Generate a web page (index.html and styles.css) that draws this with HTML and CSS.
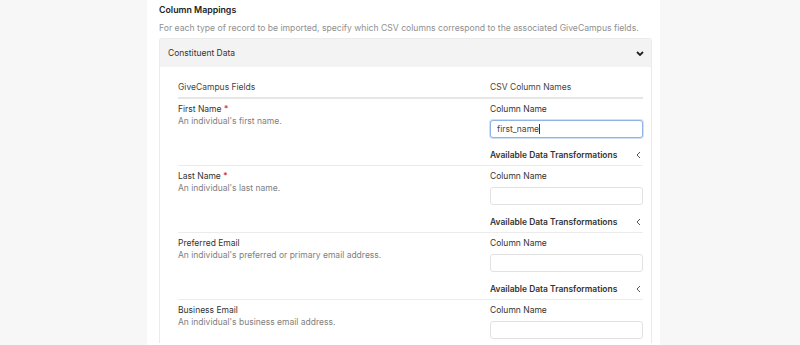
FILE: index.html
```html
<!DOCTYPE html>
<html lang="en">
<head>
  <meta charset="UTF-8" />
  <title>Column Mappings</title>
  <link rel="stylesheet" href="styles.css">
</head>
<body>
  <div class="page">
    <div class="panel">
      <h3>Column Mappings</h3>
      <p class="intro">For each type of record to be imported, specify which CSV columns correspond to the associated GiveCampus fields.</p>

      <div class="card">
        <div class="card-header">
          <span>Constituent Data</span>
          <svg class="chev-down" width="8" height="5" viewBox="0 0 8 5"><path d="M1 1l3 3 3-3" fill="none" stroke="#222" stroke-width="1.8"/></svg>
        </div>
        <div class="card-body">
          <div class="row head">
            <div>GiveCampus Fields</div>
            <div>CSV Column Names</div>
          </div>

          <div class="row">
            <div class="field">
              <div class="name">First Name <span class="req">*</span></div>
              <div class="desc">An individual's first name.</div>
            </div>
            <div class="mapping">
              <label>Column Name</label>
              <div class="input-wrap">
                <input type="text" class="focused" value="first_name">
                <span class="caret"></span>
              </div>
              <div class="transforms">
                <span>Available Data Transformations</span>
                <svg width="5" height="8" viewBox="0 0 5 8"><path d="M4 1L1 4l3 3" fill="none" stroke="#555" stroke-width="1"/></svg>
              </div>
            </div>
          </div>

          <div class="row">
            <div class="field">
              <div class="name">Last Name <span class="req">*</span></div>
              <div class="desc">An individual's last name.</div>
            </div>
            <div class="mapping">
              <label>Column Name</label>
              <div class="input-wrap"><input type="text"></div>
              <div class="transforms">
                <span>Available Data Transformations</span>
                <svg width="5" height="8" viewBox="0 0 5 8"><path d="M4 1L1 4l3 3" fill="none" stroke="#555" stroke-width="1"/></svg>
              </div>
            </div>
          </div>

          <div class="row">
            <div class="field">
              <div class="name">Preferred Email</div>
              <div class="desc">An individual's preferred or primary email address.</div>
            </div>
            <div class="mapping">
              <label>Column Name</label>
              <div class="input-wrap"><input type="text"></div>
              <div class="transforms">
                <span>Available Data Transformations</span>
                <svg width="5" height="8" viewBox="0 0 5 8"><path d="M4 1L1 4l3 3" fill="none" stroke="#555" stroke-width="1"/></svg>
              </div>
            </div>
          </div>

          <div class="row last">
            <div class="field">
              <div class="name">Business Email</div>
              <div class="desc">An individual's business email address.</div>
            </div>
            <div class="mapping">
              <label>Column Name</label>
              <div class="input-wrap"><input type="text"></div>
            </div>
          </div>
        </div>
      </div>
    </div>
  </div>
</body>
</html>
```

FILE: styles.css
```css
* { box-sizing: border-box; margin: 0; padding: 0; }
body { font-family: Inter, 'Noto Sans', sans-serif; font-size: 8.5px; color: #333; background: #f7f7f7; height: 345px; overflow: hidden; }

.page { padding-left: 147px; }
.panel { width: 513px; background: #fff; padding: 4px 8px 0 12px; min-height: 345px; }

h3 { font-size: 8.8px; font-weight: 600; line-height: 12px; color: #222; }
.intro { font-size: 8.65px; line-height: 12px; margin-top: 6px; color: #909090; }

.card { margin-top: 4px; border: 1px solid #ebebeb; border-bottom: none; border-radius: 3px 3px 0 0; }
.card-header {
  height: 28px;
  background: #f3f3f3;
  display: flex;
  align-items: center;
  justify-content: space-between;
  padding: 0 7px 0 8px;
  color: #333;
}
.chev-down { display: block; }

.card-body { padding: 14px 8px 0 18px; }

.row {
  display: grid;
  grid-template-columns: 312px 153px;
  border-bottom: 1px solid #ececec;
  line-height: 12px;
}
.row.head { padding-bottom: 4px; border-bottom: 2px solid #e6e6e6; color: #444; }
.row.last { border-bottom: none; }

.field { padding-top: 4px; }
.name { color: #333; }
.req { color: #c9302c; }
.desc { color: #808080; }

.mapping { padding: 4px 0 4px; }
.mapping label { display: block; color: #333; }
.input-wrap { position: relative; margin-top: 5px; }
.mapping input {
  display: block;
  width: 100%;
  height: 18px;
  border: 1px solid #e2e2e2;
  border-radius: 3px;
  padding: 0 6px;
  font-family: Inter, 'Noto Sans', sans-serif;
  font-size: 8.5px;
  color: #444;
  background: #fff;
  outline: none;
}
.mapping input.focused { border-color: #8fb4e8; box-shadow: 0 0 0 1px rgba(120, 165, 230, 0.35); }
.caret { position: absolute; left: 49px; top: 4px; width: 1px; height: 10px; background: #333; }

.transforms {
  display: flex;
  justify-content: space-between;
  align-items: center;
  margin-top: 11px;
  padding-right: 2px;
  font-size: 8.45px;
  font-weight: 600;
  color: #333;
}
.transforms svg { display: block; }
```
